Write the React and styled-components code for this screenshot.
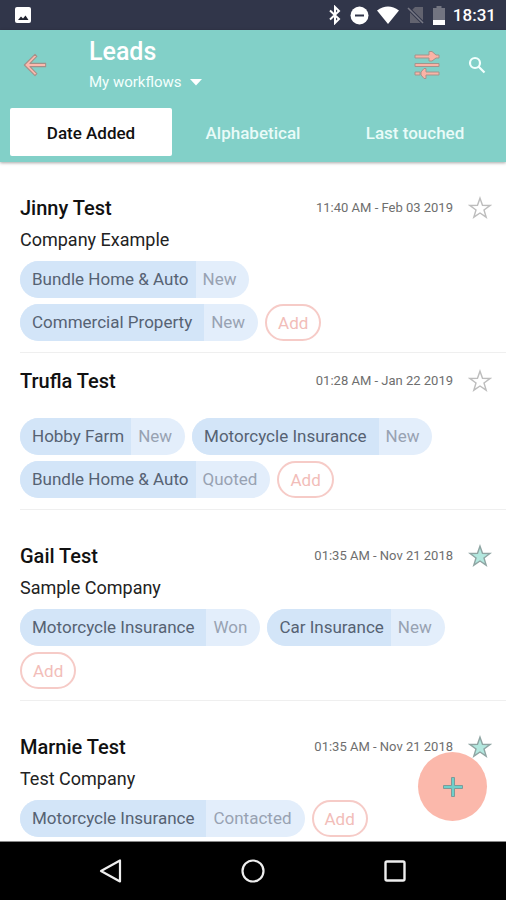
import React, { useState } from "react";
import styled, { createGlobalStyle } from "styled-components";

const GlobalStyle = createGlobalStyle`
  *, *::before, *::after { box-sizing: border-box; }
  body { margin: 0; background: #fff; }
  body, button, select { font-family: Roboto, "Noto Sans", sans-serif; }
  button { margin: 0; padding: 0; border: 0; background: none; color: inherit; cursor: pointer; }
  svg { display: block; flex: none; }
  h1, h2, p, ul { margin: 0; padding: 0; }
  ul { list-style: none; }
`;

const Shell = styled.div`
  position: relative;
  display: flex;
  flex-direction: column;
  height: 100vh;
  background: #fff;
`;

const StatusBar = styled.div`
  flex: none;
  display: flex;
  align-items: center;
  height: 30px;
  padding: 0 10px 0 14px;
  background: #31364a;
  color: #fff;
`;

const StatusIcons = styled.div`
  display: flex;
  align-items: center;
  gap: 8px;
  margin-left: auto;
`;

const Clock = styled.span`
  font-size: 17px;
  font-weight: 500;
  line-height: 30px;
`;

const Header = styled.header`
  position: relative;
  flex: none;
  padding: 5px 0 6px;
  background: #82d0c8;
  box-shadow: 0 1px 3px rgba(0, 0, 0, 0.35);
  color: #fff;
`;

const Toolbar = styled.div`
  display: flex;
  align-items: flex-start;
  height: 73px;
  padding: 0 4px 0 10px;
`;

const IconButton = styled.button`
  display: grid;
  place-items: center;
  width: 50px;
  height: 60px;
`;

const Heading = styled.div`
  flex: 1;
  padding-left: 29px;
`;

const Title = styled.h1`
  font-size: 25px;
  font-weight: 500;
  line-height: 33px;
`;

const WorkflowPicker = styled.label`
  display: inline-flex;
  align-items: center;
  gap: 8px;
  height: 28px;
`;

const WorkflowSelect = styled.select`
  appearance: none;
  padding: 0;
  border: 0;
  background: none;
  color: #f4fffd;
  font-size: 15px;
  line-height: 20px;
`;

const Tabs = styled.div`
  display: grid;
  grid-template-columns: repeat(3, 1fr);
  padding: 0 10px;
`;

const Tab = styled.button`
  height: 48px;
  padding-top: 2px;
  border-radius: 2px;
  background: ${(p) => (p.$active ? "#fff" : "transparent")};
  color: ${(p) => (p.$active ? "#111" : "#e9fbf8")};
  font-size: 17px;
  font-weight: 500;
`;

const LeadList = styled.ul`
  flex: 1;
  min-height: 0;
  overflow-y: auto;
  scrollbar-width: none;
`;

const Lead = styled.li`
  display: flex;
  flex-direction: column;
  margin-left: 20px;
  padding: ${(p) => (p.$compact ? 16 : 34)}px 14px 11px 0;
  border-bottom: 1px solid #efefef;
`;

const LeadTop = styled.div`
  display: flex;
  align-items: center;
  height: 24px;
`;

const Name = styled.h2`
  flex: 1;
  color: #111;
  font-size: 20px;
  font-weight: 500;
  line-height: 24px;
`;

const DateText = styled.time`
  color: #6e6e6e;
  font-size: 13px;
  line-height: 24px;
`;

const StarButton = styled.button`
  margin-left: 15px;
`;

const Company = styled.p`
  margin-top: 8px;
  color: #222;
  font-size: 18px;
  line-height: 24px;
`;

const Chips = styled.div`
  display: flex;
  flex-wrap: wrap;
  gap: 6px 7px;
  margin-top: ${(p) => (p.$compact ? 25 : 9)}px;
`;

const Chip = styled.div`
  display: flex;
  height: 37px;
  border-radius: 19px;
  overflow: hidden;
  background: #e3eefb;
  font-size: 17px;
  line-height: 37px;
  white-space: nowrap;
`;

const ChipLabel = styled.span`
  padding: 0 ${(p) => (p.$roomy ? 12 : 7)}px 0 12px;
  background: #d3e5f8;
  color: #566273;
`;

const ChipStatus = styled.span`
  padding: 0 13px 0 7px;
  color: #98a2b2;
`;

const AddButton = styled.button`
  height: 37px;
  padding: 0 11px;
  border: 2px solid #f6cbc7;
  border-radius: 19px;
  color: #f2bdb9;
  font-size: 17px;
`;

const FabLayer = styled.div`
  position: absolute;
  right: 19px;
  bottom: 79px;
`;

const Fab = styled.button`
  display: grid;
  place-items: center;
  width: 69px;
  height: 69px;
  border-radius: 50%;
  background: #fbb8ab;
`;

const NavBar = styled.nav`
  position: relative;
  flex: none;
  display: flex;
  align-items: center;
  justify-content: center;
  gap: 110px;
  height: 59px;
  border-top: 1px solid #888;
  background: #000;
`;

const NavButton = styled.button`
  display: grid;
  place-items: center;
  width: 32px;
  height: 32px;
`;

const leads = [
  {
    name: "Jinny Test", company: "Company Example", date: "11:40 AM - Feb 03 2019", starred: false,
    workflows: [
      { label: "Bundle Home & Auto", status: "New" },
      { label: "Commercial Property", status: "New", roomy: true },
    ],
  },
  {
    name: "Trufla Test", date: "01:28 AM - Jan 22 2019", starred: false,
    workflows: [
      { label: "Hobby Farm", status: "New" },
      { label: "Motorcycle Insurance", status: "New", roomy: true },
      { label: "Bundle Home & Auto", status: "Quoted" },
    ],
  },
  {
    name: "Gail Test", company: "Sample Company", date: "01:35 AM - Nov 21 2018", starred: true,
    workflows: [
      { label: "Motorcycle Insurance", status: "Won", roomy: true },
      { label: "Car Insurance", status: "New" },
    ],
  },
  {
    name: "Marnie Test", company: "Test Company", date: "01:35 AM - Nov 21 2018", starred: true,
    workflows: [{ label: "Motorcycle Insurance", status: "Contacted", roomy: true }],
  },
];

const PhotoIcon = () => (
  <svg width="18" height="18" viewBox="0 0 18 18">
    <rect x="1" y="1" width="16" height="16" rx="2" fill="#fff" />
    <path d="M4 14l3-3.500 2 2 2.500-3 3 4.500z" fill="#20222e" />
  </svg>
);

const BluetoothIcon = () => (
  <svg width="14" height="20" viewBox="0 0 14 20" fill="none" stroke="#fff" strokeWidth="2">
    <path d="M2 5.500l9 8.500-4 4V2l4 4-9 8.500" />
  </svg>
);

const DoNotDisturbIcon = () => (
  <svg width="19" height="19" viewBox="0 0 19 19">
    <circle cx="9.500" cy="9.500" r="9" fill="#fff" />
    <path d="M5 9.500h9" stroke="#31364a" strokeWidth="2" />
  </svg>
);

const WifiIcon = () => (
  <svg width="22" height="18" viewBox="0 0 22 18">
    <path d="M0 4.500Q11-3.500 22 4.500L11 18z" fill="#fff" />
  </svg>
);

const NoSimIcon = () => (
  <svg width="18" height="18" viewBox="0 0 18 18">
    <path d="M8 1h8v16H3V6z" fill="#62636f" />
    <path d="M1 2l15 15" stroke="#31364a" strokeWidth="3.500" />
    <path d="M1 2l15 15" stroke="#777884" strokeWidth="1.600" />
  </svg>
);

const BatteryIcon = () => (
  <svg width="12" height="19" viewBox="0 0 12 19">
    <path d="M3.500 0h5v2H12v12H0V2h3.500z" fill="#737581" />
    <path d="M0 14h12v5H0z" fill="#fff" />
  </svg>
);

const BackIcon = () => (
  <svg width="32" height="32" viewBox="0 0 24 24">
    <path
      d="M20 10.800H8.200l5.200-5.200L12 4l-8 8 8 8 1.400-1.600L8.200 13.200H20z"
      fill="#fdb9ae" stroke="#a49088" strokeWidth=".8" strokeLinejoin="round"
    />
  </svg>
);

const FilterIcon = () => (
  <svg width="28" height="30" viewBox="0 0 28 30" fill="#fbb3a6" stroke="#a3948c" strokeWidth="1" strokeLinejoin="round">
    <path d="M2 5h14V1.500h3L23 5h3v3h-3l-4 3h-3V8H2z" />
    <path d="M2 13.500h24v3H2z" />
    <path d="M2 22h5v3H2zM8 22l3-3.500h2V22h13v3H13v3.500h-2L8 25z" />
  </svg>
);

const SearchIcon = () => (
  <svg width="18" height="18" viewBox="0 0 18 18" fill="none" stroke="#f2fffd" strokeWidth="2.200">
    <circle cx="7" cy="7" r="5" />
    <path d="M10.500 10.500l6 6" />
  </svg>
);

const CaretIcon = () => (
  <svg width="12" height="7" viewBox="0 0 12 7">
    <path d="M0 0h12L6 6.500z" fill="#fff" />
  </svg>
);

const StarIcon = ({ filled }) => (
  <svg width="24" height="24" viewBox="0 0 24 24">
    <path
      d="M12 2.200l2.500 7.100 7.500.2-6 4.500 2.200 7.200L12 17l-6.200 4.200L8 14 2 9.500l7.500-.2z"
      fill={filled ? "#b3e8df" : "#fff"} stroke={filled ? "#8fa5a3" : "#bdbdbd"} strokeWidth="1.400"
    />
  </svg>
);

const PlusIcon = () => (
  <svg width="22" height="22" viewBox="0 0 22 22">
    <path
      d="M9.500 1.500h3v8h8v3h-8v8h-3v-8h-8v-3h8z"
      fill="#6fd0cb" stroke="#7f9a98" strokeWidth="1"
    />
  </svg>
);

const LeadItem = ({ lead }) => {
  const [starred, setStarred] = useState(lead.starred);
  const compact = !lead.company;
  return (
    <Lead $compact={compact}>
      <LeadTop>
        <Name>{lead.name}</Name>
        <DateText>{lead.date}</DateText>
        <StarButton aria-label={`Star ${lead.name}`} aria-pressed={starred} onClick={() => setStarred(!starred)}>
          <StarIcon filled={starred} />
        </StarButton>
      </LeadTop>
      {lead.company && <Company>{lead.company}</Company>}
      <Chips $compact={compact}>
        {lead.workflows.map((w) => (
          <Chip key={w.label}>
            <ChipLabel $roomy={w.roomy}>{w.label}</ChipLabel>
            <ChipStatus>{w.status}</ChipStatus>
          </Chip>
        ))}
        <AddButton>Add</AddButton>
      </Chips>
    </Lead>
  );
};

export default function App() {
  const [tab, setTab] = useState("Date Added");
  return (
    <Shell>
      <GlobalStyle />
      <StatusBar>
        <PhotoIcon />
        <StatusIcons>
          <BluetoothIcon />
          <DoNotDisturbIcon />
          <WifiIcon />
          <NoSimIcon />
          <BatteryIcon />
          <Clock>18:31</Clock>
        </StatusIcons>
      </StatusBar>
      <Header>
        <Toolbar>
          <IconButton aria-label="Back"><BackIcon /></IconButton>
          <Heading>
            <Title>Leads</Title>
            <WorkflowPicker>
              <WorkflowSelect aria-label="Workflow">
                <option>My workflows</option>
              </WorkflowSelect>
              <CaretIcon />
            </WorkflowPicker>
          </Heading>
          <IconButton aria-label="Filter"><FilterIcon /></IconButton>
          <IconButton aria-label="Search"><SearchIcon /></IconButton>
        </Toolbar>
        <Tabs role="tablist">
          {["Date Added", "Alphabetical", "Last touched"].map((t) => (
            <Tab key={t} role="tab" aria-selected={tab === t} $active={tab === t} onClick={() => setTab(t)}>
              {t}
            </Tab>
          ))}
        </Tabs>
      </Header>
      <LeadList>
        {leads.map((lead) => <LeadItem key={lead.name} lead={lead} />)}
      </LeadList>
      <FabLayer>
        <Fab aria-label="Add lead"><PlusIcon /></Fab>
      </FabLayer>
      <NavBar aria-label="System">
        <NavButton aria-label="Back">
          <svg width="24" height="26" viewBox="0 0 24 26" fill="none" stroke="#eee" strokeWidth="2.200" strokeLinejoin="round">
            <path d="M21 2.500v21L2 13z" />
          </svg>
        </NavButton>
        <NavButton aria-label="Home">
          <svg width="26" height="26" viewBox="0 0 26 26" fill="none" stroke="#eee" strokeWidth="2.200">
            <circle cx="13" cy="13" r="10.500" />
          </svg>
        </NavButton>
        <NavButton aria-label="Recents">
          <svg width="22" height="22" viewBox="0 0 22 22" fill="none" stroke="#eee" strokeWidth="2.400">
            <rect x="1.500" y="1.500" width="19" height="19" rx="1.500" />
          </svg>
        </NavButton>
      </NavBar>
    </Shell>
  );
}
